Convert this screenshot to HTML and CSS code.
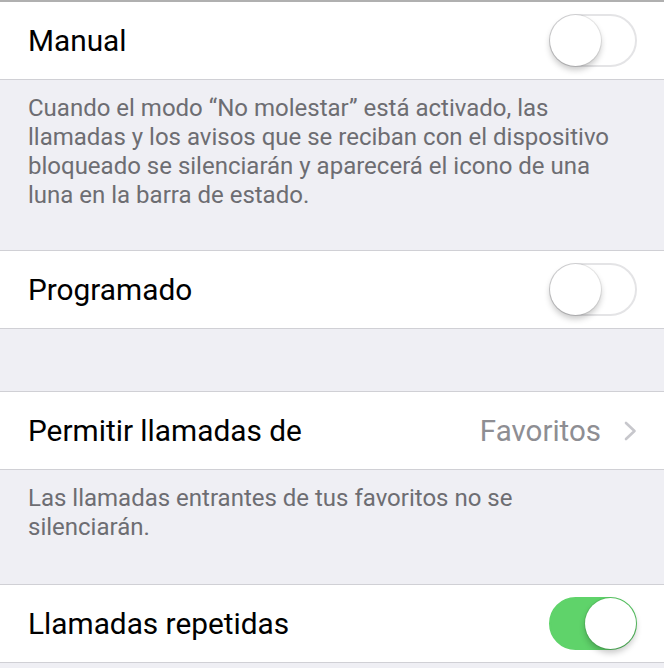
FILE: index.html
```html
<!DOCTYPE html>
<html lang="es">
<head>
<meta charset="utf-8">
<link rel="stylesheet" href="styles.css">
</head>
<body>
<div class="screen">
  <div class="cell first">
    <span class="label">Manual</span>
    <span class="switch"><span class="knob"></span></span>
  </div>
  <div class="footer tall">Cuando el modo “No molestar” está activado, las<br>llamadas y los avisos que se reciban con el dispositivo<br>bloqueado se silenciarán y aparecerá el icono de una<br>luna en la barra de estado.</div>
  <div class="cell">
    <span class="label">Programado</span>
    <span class="switch"><span class="knob"></span></span>
  </div>
  <div class="gap"></div>
  <div class="cell">
    <span class="label">Permitir llamadas de</span>
    <span class="detail">Favoritos</span>
    <svg class="chevron" width="13" height="20" viewBox="0 0 13 20"><path d="M2 2 L10.5 10 L2 18" fill="none" stroke="#c7c7cc" stroke-width="2.6" stroke-linecap="round" stroke-linejoin="round"/></svg>
  </div>
  <div class="footer short">Las llamadas entrantes de tus favoritos no se<br>silenciarán.</div>
  <div class="cell">
    <span class="label">Llamadas repetidas</span>
    <span class="switch on"><span class="knob"></span></span>
  </div>
</div>
</body>
</html>
```
FILE: styles.css
```css
html, body {
  margin: 0;
  padding: 0;
  background: #efeff4;
}
.screen {
  width: 664px;
  height: 668px;
  overflow: hidden;
  font-family: Roboto, "Noto Sans", sans-serif;
}
.cell {
  height: 77px;
  background: #fff;
  border-top: 1px solid #d0d0d5;
  border-bottom: 1px solid #d0d0d5;
  display: flex;
  align-items: center;
  padding: 0 27px 0 28px;
}
.cell + .cell {
  border-top: none;
}
.footer + .cell, .gap + .cell {
  border-top: none;
}
.cell.first {
  border-top: 2px solid #b0b0b0;
}
.label {
  flex: 1;
  font-size: 29.8px;
  color: #000;
  white-space: nowrap;
}
.detail {
  font-size: 29.5px;
  color: #8e8e93;
  margin-right: 23px;
}
.chevron {
  display: block;
}
.switch {
  position: relative;
  width: 88px;
  height: 53px;
  border-radius: 27px;
  box-sizing: border-box;
  border: 2px solid #e4e4e6;
  background: #fff;
}
.switch .knob {
  position: absolute;
  top: -1px;
  left: -1px;
  width: 51px;
  height: 51px;
  border-radius: 50%;
  background: #fff;
  box-shadow: 0 4px 6px rgba(0,0,0,0.22), 0 0 0 1px rgba(0,0,0,0.08);
}
.switch.on {
  background: #5fd36a;
  border-color: #5fd36a;
}
.switch.on .knob {
  left: auto;
  right: -1px;
}
.footer {
  font-size: 24px;
  line-height: 29px;
  color: #6d6d72;
  padding: 14px 20px 0 28px;
  box-sizing: border-box;
  white-space: nowrap;
  border-bottom: 1px solid #d0d0d5;
}
.footer.tall {
  height: 171px;
}
.footer.short {
  height: 115px;
}
.gap {
  height: 63px;
  border-bottom: 1px solid #d0d0d5;
  box-sizing: border-box;
}
```
